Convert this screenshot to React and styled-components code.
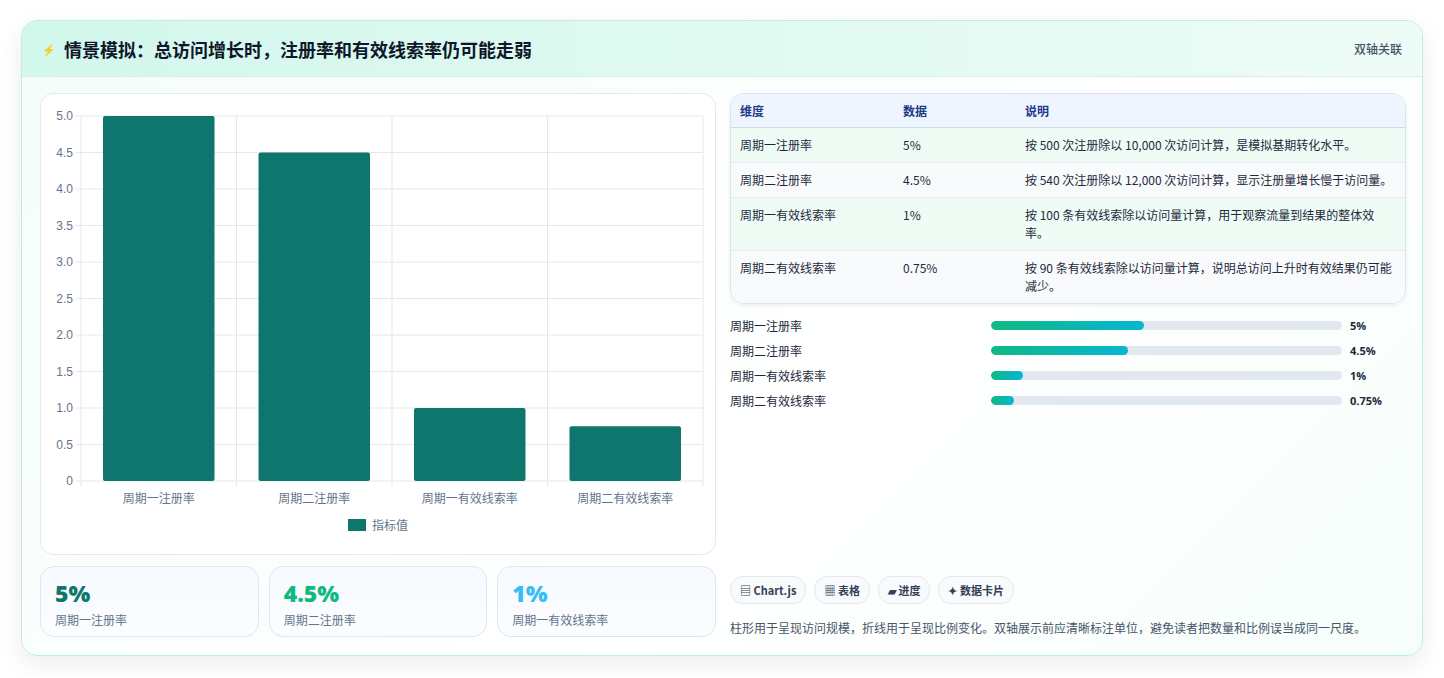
import React from 'react';
import styled, { createGlobalStyle } from 'styled-components';

const Global = createGlobalStyle`
  body { margin: 0; background: #fff; font-family: "Noto Sans CJK SC", "Noto Sans", sans-serif; }
`;

const Page = styled.div`
  padding: 20px 21px;
`;

const Card = styled.section`
  border: 1px solid #bfeee0;
  border-radius: 16px;
  background: linear-gradient(135deg, #f4fdf9 0%, #ffffff 60%, #f6fefb 100%);
  box-shadow: 0 8px 24px rgba(15, 23, 42, 0.08);
  overflow: hidden;
`;

const Header = styled.header`
  height: 55px;
  display: flex;
  align-items: center;
  justify-content: space-between;
  padding: 0 20px 0 20px;
  background: linear-gradient(90deg, #d2f7ec 0%, #e2faf2 60%, #eefcf7 100%);
  border-bottom: 1px solid #d3efe6;
`;

const Title = styled.h2`
  margin: 0;
  font-size: 18px;
  font-weight: 700;
  color: #0f172a;
  display: flex;
  align-items: center;
  gap: 8px;
`;

const Bolt = styled.span`
  color: #3b82f6;
  font-size: 11px;
`;

const Badge = styled.span`
  font-size: 12px;
  color: #475569;
  font-weight: 500;
`;

const Body = styled.div`
  display: grid;
  grid-template-columns: 676px 676px;
  gap: 14px;
  padding: 16px 18px 18px;
`;

const Col = styled.div`
  display: flex;
  flex-direction: column;
  gap: 11px;
`;

const ChartBox = styled.div`
  height: 460px;
  border: 1px solid #e2e8f0;
  border-radius: 14px;
  background: #fff;
`;

const Stats = styled.div`
  display: grid;
  grid-template-columns: repeat(3, 1fr);
  gap: 10px;
`;

const Stat = styled.div`
  height: 71px;
  border: 1px solid #dbe7f3;
  border-radius: 14px;
  background: linear-gradient(180deg, #f7fafe 0%, #fbfdff 100%);
  padding: 12px 14px;
  box-sizing: border-box;
`;

const StatValue = styled.div`
  font-family: "Open Sans", sans-serif;
  font-size: 23px;
  font-weight: 800;
  line-height: 28px;
  color: ${({ $c }) => $c};
`;

const StatLabel = styled.div`
  font-size: 12px;
  color: #64748b;
  margin-top: 4px;
`;

const Table = styled.table`
  width: 100%;
  border-collapse: separate;
  border-spacing: 0;
  border: 1px solid #dbe3ee;
  border-radius: 14px;
  overflow: hidden;
  font-size: 12px;
  color: #1e293b;
  box-shadow: 0 2px 4px rgba(15,23,42,0.06);
`;

const Th = styled.th`
  text-align: left;
  font-weight: 600;
  color: #1e3a8a;
  background: #eef5fe;
  padding: 0 9px;
  height: 33px;
  border-bottom: 1px solid #cfdbe9;
  width: ${({ $w }) => $w || 'auto'};
`;

const Td = styled.td`
  padding: 8px 9px;
  line-height: 18px;
  vertical-align: top;
  border-top: ${({ $first }) => ($first ? 'none' : '1px solid #e6ecf2')};
  background: ${({ $odd }) => ($odd ? '#effcf6' : '#f8fafc')};
`;

const Bars = styled.div`
  display: flex;
  flex-direction: column;
  gap: 8px;
  margin-top: 2px;
`;

const BarRow = styled.div`
  display: grid;
  grid-template-columns: 253px 351px auto;
  align-items: center;
  column-gap: 8px;
  height: 17px;
  font-size: 12px;
  color: #1e293b;
`;

const Track = styled.div`
  height: 9px;
  border-radius: 5px;
  background: #e2e8f0;
  overflow: hidden;
`;

const Fill = styled.div`
  height: 100%;
  border-radius: 5px;
  background: linear-gradient(90deg, #10b981 0%, #06b6d4 100%);
`;

const BarVal = styled.span`
  font-weight: 700;
  font-family: "Open Sans", sans-serif;
  font-size: 11px;
`;

const Spacer = styled.div`
  flex: 1;
`;

const Tags = styled.div`
  display: flex;
  gap: 8px;
`;

const Tag = styled.span`
  display: inline-flex;
  align-items: center;
  gap: 4px;
  height: 26px;
  padding: 0 9px;
  border: 1px solid #e2e8f0;
  border-radius: 13px;
  background: #f8fafc;
  font-size: 11px;
  font-weight: 600;
  color: #334155;
`;

const Desc = styled.p`
  margin: 4px 0 0;
  font-size: 12px;
  line-height: 18px;
  color: #475569;
`;

const cats = ['周期一注册率', '周期二注册率', '周期一有效线索率', '周期二有效线索率'];
const vals = [5, 4.5, 1, 0.75];

function BarChart() {
  const x0 = 40, x1 = 662, y0 = 22, y1 = 387;
  const cw = (x1 - x0) / 4;
  const ticks = [0, 0.5, 1, 1.5, 2, 2.5, 3, 3.5, 4, 4.5, 5];
  const y = (v) => y1 - (v / 5) * (y1 - y0);
  return (
    <svg width="676" height="460" style={{ display: 'block' }}>
      {ticks.map((t) => (
        <g key={t}>
          <line x1={x0 - 5} x2={x1} y1={y(t)} y2={y(t)} stroke="#e5e7eb" />
          <text x={x0 - 8} y={y(t) + 4} fontSize="12" fill="#64748b" textAnchor="end" fontFamily="Liberation Sans, sans-serif">
            {t === 0 ? '0' : t.toFixed(1)}
          </text>
        </g>
      ))}
      {[0, 1, 2, 3, 4].map((i) => (
        <line key={i} x1={x0 + i * cw} x2={x0 + i * cw} y1={y0} y2={y1 + 5} stroke="#e5e7eb" />
      ))}
      {vals.map((v, i) => (
        <g key={i}>
          <rect x={x0 + i * cw + 22} y={y(v)} width={cw - 44} height={y1 - y(v)} fill="#0f766e" rx="2" />
          <text x={x0 + i * cw + cw / 2} y={y1 + 22} fontSize="12" fill="#64748b" textAnchor="middle">{cats[i]}</text>
        </g>
      ))}
      <rect x="307" y="425" width="18" height="12" fill="#0f766e" />
      <text x="331" y="436" fontSize="12" fill="#64748b">指标值</text>
    </svg>
  );
}

const rows = [
  ['周期一注册率', '5%', '按 500 次注册除以 10,000 次访问计算，是模拟基期转化水平。'],
  ['周期二注册率', '4.5%', '按 540 次注册除以 12,000 次访问计算，显示注册量增长慢于访问量。'],
  ['周期一有效线索率', '1%', '按 100 条有效线索除以访问量计算，用于观察流量到结果的整体效率。'],
  ['周期二有效线索率', '0.75%', '按 90 条有效线索除以访问量计算，说明总访问上升时有效结果仍可能减少。'],
];
const pct = [43.5, 39, 9, 6.5];

export default function App() {
  return (
    <Page>
      <Global />
      <Card>
        <Header>
          <Title><Bolt>⚡</Bolt>情景模拟：总访问增长时，注册率和有效线索率仍可能走弱</Title>
          <Badge>双轴关联</Badge>
        </Header>
        <Body>
          <Col>
            <ChartBox><BarChart /></ChartBox>
            <Stats>
              <Stat><StatValue $c="#0f766e">5%</StatValue><StatLabel>周期一注册率</StatLabel></Stat>
              <Stat><StatValue $c="#10b981">4.5%</StatValue><StatLabel>周期二注册率</StatLabel></Stat>
              <Stat><StatValue $c="#38bdf8">1%</StatValue><StatLabel>周期一有效线索率</StatLabel></Stat>
            </Stats>
          </Col>
          <Col>
            <Table>
              <thead>
                <tr><Th $w="145px">维度</Th><Th $w="104px">数据</Th><Th>说明</Th></tr>
              </thead>
              <tbody>
                {rows.map((r, i) => (
                  <tr key={i}>
                    {r.map((c, j) => <Td key={j} $first={i === 0} $odd={i % 2 === 0}>{c}</Td>)}
                  </tr>
                ))}
              </tbody>
            </Table>
            <Bars>
              {rows.map((r, i) => (
                <BarRow key={i}>
                  <span>{r[0]}</span>
                  <Track><Fill style={{ width: `${pct[i]}%` }} /></Track>
                  <BarVal>{r[1]}</BarVal>
                </BarRow>
              ))}
            </Bars>
            <Spacer />
            <Tags>
              <Tag>▤ Chart.js</Tag>
              <Tag>▦ 表格</Tag>
              <Tag>▰ 进度</Tag>
              <Tag>✦ 数据卡片</Tag>
            </Tags>
            <Desc>柱形用于呈现访问规模，折线用于呈现比例变化。双轴展示前应清晰标注单位，避免读者把数量和比例误当成同一尺度。</Desc>
          </Col>
        </Body>
      </Card>
    </Page>
  );
}
